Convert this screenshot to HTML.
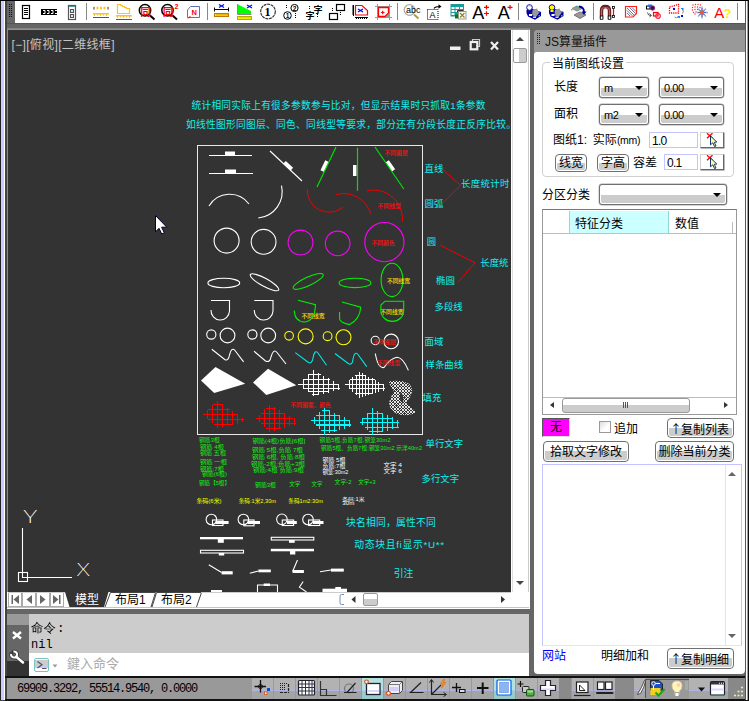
<!DOCTYPE html>
<html lang="zh">
<head>
<meta charset="utf-8">
<title>JS算量插件</title>
<style>
html,body{margin:0;padding:0;}
body{width:749px;height:701px;overflow:hidden;background:#666;position:relative;
 font-family:"Liberation Sans","Noto Sans CJK SC",sans-serif;font-size:12px;color:#000;}
.abs{position:absolute;}
#frame-top{left:0;top:0;width:749px;height:1px;background:#000;}
#left-edge{left:0;top:0;width:7px;height:701px;background:#444;}
#left-edge i{position:absolute;top:1px;height:699px;}
#toolbar{left:15px;top:1px;width:734px;height:22px;background:#fff;}
#grip{left:7px;top:1px;width:8px;height:22px;background:#666;}
#band{left:7px;top:23px;width:742px;height:6px;background:#666;border-top:1px solid #555;box-sizing:border-box;}
#drawborder{left:7px;top:28px;width:523px;height:2px;background:linear-gradient(#7a7a7a,#999);}

#panel{left:534px;top:52px;width:211px;height:622px;background:#fff;border-radius:3px 0 4px 4px;}
#panelhead{left:534px;top:30px;width:211px;height:24px;background:#999;border-radius:3px 0 0 0;}
#panelhead span{position:absolute;left:11px;top:5px;font-size:12px;line-height:14px;color:#111;white-space:nowrap;}
.dots{position:absolute;width:3px;background-image:radial-gradient(circle at .5px .5px,#222 .6px,transparent .7px);background-size:2px 2px;}
#right-edge{left:745px;top:0;width:4px;height:701px;}
#right-edge i{position:absolute;top:1px;height:699px;width:1px;}
.lbl{position:absolute;margin-top:1px;font-size:12px;line-height:14px;white-space:nowrap;color:#000;}
.combo{position:absolute;box-sizing:border-box;border:1px solid #707070;border-radius:3px;background:#fff;box-shadow:0 0 0 .4px #aaa;}
.combo:before{content:"";position:absolute;left:1px;right:1px;top:10px;bottom:1px;background:#ccc;border-radius:0 0 2px 2px;}
.combo:after{content:"";position:absolute;right:5px;top:8px;border-left:4px solid transparent;border-right:4px solid transparent;border-top:4px solid #000;}
.combo span{position:absolute;left:4px;top:3px;font-size:11px;line-height:14px;color:#000;z-index:1;letter-spacing:-.4px;}
.btn{position:absolute;box-sizing:border-box;border:1px solid #707070;border-radius:4px;background:#fff;text-align:center;font-size:12px;line-height:15px;white-space:nowrap;}
.btn:before{content:"";position:absolute;left:1px;right:1px;top:48%;bottom:1px;background:#ccc;border-radius:0 0 2px 2px;}
.btn span{position:relative;z-index:1;top:1px;}
.ar{font-weight:normal;font-family:"Noto Sans CJK SC",sans-serif;font-size:12px;display:inline-block;width:9px;text-align:center;text-indent:-2px;}
.inp{position:absolute;box-sizing:border-box;border:1px solid #c4c4ff;background:#fff;font-size:12px;line-height:14px;padding:1px 0 0 2px;letter-spacing:-.7px;}
.pick{position:absolute;box-sizing:border-box;background:#fff;border:1px solid;border-color:#d0d0d0 #666 #666 #d0d0d0;box-shadow:.5px .5px 0 #777;}

#tbl{left:542px;top:209px;width:195px;height:206px;box-sizing:border-box;border:1px solid #999;border-top-color:#777;background:#fff;}
#tblhead{left:543px;top:233px;width:193px;height:1px;background:#bbb;}
#tblsel{left:569px;top:211px;width:100px;height:23px;box-sizing:border-box;background:#ccffff;border:1px solid #8fd8d8;border-top:none;}
#tblscroll{left:543px;top:397px;width:193px;height:1px;background:#bbb;}
#thumb{left:562px;top:398px;width:128px;height:15px;box-sizing:border-box;border:1px solid #999;border-radius:3px;background:linear-gradient(#fff 0,#fff 45%,#ccc 45%,#ccc 100%);}
.tri{position:absolute;width:0;height:0;}
#ta{left:542px;top:464px;width:200px;height:182px;box-sizing:border-box;border:1px solid #c4c4ff;border-bottom-color:#c8f0f8;background:#fff;}
#chk{left:599px;top:421px;width:12px;height:12px;box-sizing:border-box;border:1px solid #999;background:linear-gradient(135deg,#ddd 0,#fff 60%);}
#wu{left:542px;top:418px;width:28px;height:19px;box-sizing:border-box;background:#ff00ff;border:1px solid;border-color:#555 #ddd #ddd #555;font-size:12px;line-height:16px;text-align:center;}

#draw{left:8px;top:30px;width:503px;height:562px;background:#333;overflow:hidden;}
#vscroll{left:511px;top:30px;width:19px;height:579px;background:#fff;}
#tabbar{left:7px;top:592px;width:523px;height:17px;background:#fff;}
#tabline{left:7px;top:607px;width:522px;height:1px;background:#c4c4c4;}
.nav{position:absolute;top:0;width:14px;height:15px;box-sizing:border-box;border:1px solid #aaa;background:#fff;}
#cmdgrip{left:7px;top:614px;width:22px;height:62px;background:#666;}
#cmdhist{left:29px;top:614px;width:500px;height:39px;background:#ccc;font-family:"Liberation Mono","WenQuanYi Zen Hei","Noto Sans CJK SC",monospace;font-size:12px;line-height:14px;}
#cmdin{left:29px;top:653px;width:500px;height:23px;background:#fff;}
#status{left:7px;top:678px;width:738px;height:21px;background:#999;}
#statline{left:5px;top:676px;width:740px;height:2px;background:#111;}
#botline{left:5px;top:699px;width:744px;height:2px;background:#111;}
.sb{position:absolute;top:0;height:21px;width:21px;background:linear-gradient(#b2b2b2 0,#b2b2b2 57%,#b4b4e4 57%,#b4b4e4 62%,#a4a4a4 62%,#a4a4a4 100%);}
.sb.on{background:linear-gradient(#b4e0e0 0,#b4e0e0 57%,#a8d0e8 57%,#a8d0e8 62%,#98cccc 62%,#98cccc 100%);}
#grp{left:542px;top:62px;width:192px;height:115px;box-sizing:border-box;border:1px solid #d0d0d0;border-radius:4px;}
</style>
</head>
<body>
<div class="abs" id="left-edge"><i style="left:0;width:1px;background:#222"></i><i style="left:1px;width:3px;background:#ccccff"></i><i style="left:4px;width:1px;background:#fff"></i></div>
<div class="abs" id="grip"></div>
<div class="abs" id="toolbar"></div>
<svg class="abs" id="tbicons" style="left:0;top:0" width="749" height="24" viewBox="0 0 749 24" font-family="'Liberation Sans','Noto Sans CJK SC',sans-serif">
<!-- grip -->
<g fill="#111"><rect x="9" y="4" width="1" height="1"/><rect x="11" y="4" width="1" height="1"/><rect x="9" y="6" width="1" height="1"/><rect x="11" y="6" width="1" height="1"/><rect x="9" y="8" width="1" height="1"/><rect x="11" y="8" width="1" height="1"/><rect x="9" y="10" width="1" height="1"/><rect x="11" y="10" width="1" height="1"/><rect x="9" y="12" width="1" height="1"/><rect x="11" y="12" width="1" height="1"/><rect x="9" y="14" width="1" height="1"/><rect x="11" y="14" width="1" height="1"/><rect x="9" y="16" width="1" height="1"/><rect x="11" y="16" width="1" height="1"/></g>
<!-- separators -->
<g stroke="#888" stroke-width="1"><path d="M86.5 3V20M207.5 3V20M397.5 3V20M518.5 3V20M593.5 3V20M737.5 3V20"/></g>
<!-- 1 -->
<rect x="22.5" y="5.5" width="7" height="13" fill="#fff" stroke="#000" stroke-width="1.2"/>
<path d="M24 8.5h4M24 10.5h4M24 12.5h4M24 14.5h4" stroke="#000" stroke-width="1"/>
<!-- 2 -->
<rect x="41" y="9" width="16" height="6" fill="#000"/>
<path d="M43 10.5h2v3h-2M47 10.5h2v3h-2M51 10.5h2v3h-2M55 10.5h2M55 13.5h2" stroke="#fff" stroke-width="1" fill="none"/>
<!-- 3 -->
<rect x="68.500" y="5.500" width="7" height="14" fill="#fff" stroke="#555" stroke-width="1.2"/>
<path d="M69 6.500h6" stroke="#4a9a9a" stroke-width="1"/>
<rect x="70.500" y="9.500" width="3" height="3" fill="#ddd" stroke="#555" stroke-width="1"/>
<rect x="70.500" y="14.500" width="3" height="3" fill="#ddd" stroke="#555" stroke-width="1"/>
<!-- 4 -->
<path d="M93 8h16" stroke="#ffc020" stroke-width="2.500" stroke-dasharray="2 1.500"/>
<rect x="93" y="7" width="2" height="2.500" fill="#999"/><rect x="107" y="7" width="2" height="2.500" fill="#999"/>
<rect x="93" y="13" width="16" height="1.500" fill="#ffc020"/>
<path d="M94.500 14v2M97.500 14v1.500M100.500 14v2M103.500 14v1.500M106.500 14v2" stroke="#ffc020" stroke-width="1"/>
<path d="M93 17.500h16" stroke="#2a6a6a" stroke-width="1"/>
<!-- 5 -->
<path d="M117.500 13.500V4.500H120.500V5.500H122.500V6.500H124.500V7.500H126.500V8.500H129.500V13.500Z" fill="none" stroke="#ffc020" stroke-width="1.200"/>
<rect x="116" y="15" width="16" height="1.500" fill="#ffc020"/>
<path d="M117.500 16v2M120.500 16v1.500M123.500 16v2M126.500 16v1.500M129.500 16v2" stroke="#ffc020" stroke-width="1"/>
<path d="M116 19.500h16" stroke="#2a6a6a" stroke-width="1"/>
<!-- 6,7 magnifiers -->
<g fill="none" stroke="#000"><circle cx="145" cy="10.300" r="5.700" stroke-width="1.500"/><path d="M149.500 15L154.500 19.500" stroke-width="2"/>
<circle cx="167.500" cy="10.300" r="5.700" stroke-width="1.500"/><path d="M172 15L177 19.500" stroke-width="2"/></g>
<text x="140.200" y="15.800" font-size="10.500" font-weight="700" fill="#ff0000">同</text>
<text x="162.700" y="15.800" font-size="10.500" font-weight="700" fill="#ff0000">同</text>
<text x="174.500" y="9" font-size="7" font-weight="bold" fill="#ff0000">2</text>
<!-- 8 -->
<path d="M187.500 17.500V10L190.500 6.500H199.500V17.500Z" fill="#fff" stroke="#6a6ab0" stroke-width="1"/>
<text x="191.500" y="15" font-size="7.500" font-weight="bold" fill="#ff0000">N</text>
<path d="M188 18.500L190.500 16" stroke="#ff0000" stroke-width="1"/>
<!-- 9 -->
<path d="M214.500 7.500v4M228.500 7.500v4M214.500 9.500h14" stroke="#000" stroke-width="1" fill="none"/>
<path d="M219 4.500l5 3M219 7.500l5 -3" stroke="#0000ff" stroke-width="1.200"/>
<rect x="214.500" y="13.500" width="14" height="3" fill="#ffe000" stroke="#c07800" stroke-width="1"/>
<path d="M217 14v1.500M219 14v1.500M221 14v1.500M223 14v1.500M225 14v1.500M227 14v1.500" stroke="#c07800" stroke-width=".8"/>
<!-- 10 -->
<path d="M238 4.500L251 11V14H238Z" fill="#00ff00"/>
<path d="M237.500 4V14.500H251.500" fill="none" stroke="#888" stroke-width="1"/>
<path d="M247 5l5 3M247 8l5 -3" stroke="#0000ff" stroke-width="1.200"/>
<rect x="237.500" y="16.500" width="14" height="3" fill="#ffff00" stroke="#b8a800" stroke-width="1"/>
<path d="M240 17v1.500M242 17v1.500M244 17v1.500M246 17v1.500M248 17v1.500M250 17v1.500" stroke="#b8a800" stroke-width=".8"/>
<!-- 11 -->
<circle cx="268" cy="11.500" r="7.300" fill="#fff" stroke="#333" stroke-width="1.200" stroke-dasharray="3 .7"/>
<text x="264.500" y="16" font-size="12" font-weight="bold" font-family="'Liberation Serif',serif" fill="#000">1</text>
<!-- 12 -->
<circle cx="294.500" cy="8" r="3.600" fill="#fff" stroke="#000" stroke-width="1"/>
<circle cx="287.500" cy="15.500" r="3.800" fill="#fff" stroke="#000" stroke-width="1"/>
<text x="292.700" y="10.500" font-size="6.500" font-weight="bold" fill="#000">2</text>
<text x="285.800" y="18" font-size="6.500" font-weight="bold" fill="#000080">1</text>
<path d="M286.500 5v4M295.500 13v5" stroke="#000" stroke-width="1" stroke-dasharray="1 1"/>
<!-- 13 -->
<text x="313.500" y="12.500" font-size="9" font-weight="bold" fill="#000">字</text>
<text x="305.500" y="19" font-size="9" font-weight="bold" fill="#000">字</text>
<path d="M309.500 6v4M317.500 14v4" stroke="#000" stroke-width="1" stroke-dasharray="1 1"/>
<!-- 14 -->
<rect x="336.500" y="4.500" width="8" height="6" fill="#fff" stroke="#000" stroke-width="1.200"/>
<rect x="329.500" y="13.500" width="8" height="6" fill="#fff" stroke="#000" stroke-width="1.200"/>
<path d="M332.500 8v4M340.500 12v4" stroke="#000" stroke-width="1" stroke-dasharray="1 1"/>
<!-- 15 -->
<path d="M355.500 5.500H362L367.500 10.500V15H355.500Z" fill="#fff" stroke="#ff0000" stroke-width="1.200"/>
<path d="M358 9l5 3M358 12l5 -3" stroke="#0000ff" stroke-width="1.200"/>
<path d="M353.500 5v11" stroke="#000" stroke-width="1"/><path d="M352 6h2M352 8h2M352 10h2M352 12h2M352 14h2" stroke="#000" stroke-width="1"/>
<path d="M355 17.500h13" stroke="#000" stroke-width="1"/><path d="M356.500 18v1M358.500 18v1M360.500 18v1M362.500 18v1M364.500 18v1M366.500 18v1" stroke="#000" stroke-width="1"/>
<!-- 16 -->
<path d="M377.500 4v16M389.500 4v16M375 6.500h17M375 17.500h17" stroke="#999" stroke-width="1"/>
<path d="M385 17L389 13V17Z" fill="#999"/>
<path d="M378.500 7.500H388.500V13L385 16.500H378.500Z" fill="#fff" stroke="#ff0000" stroke-width="1.300"/>
<path d="M381 12.500h3.500M382.700 10.800v3.500" stroke="#ff0000" stroke-width="1.200"/>
<!-- 17 -->
<circle cx="409.500" cy="10" r="5.300" fill="#fff" stroke="#aaa" stroke-width="1.200"/>
<path d="M414 14.500L418.500 18.500" stroke="#a8a030" stroke-width="1.800"/>
<text x="406" y="13" font-size="9" fill="#000">abc</text>
<!-- 18 -->
<rect x="427.500" y="9.500" width="10.500" height="10" fill="none" stroke="#000" stroke-width="1" stroke-dasharray="1 1"/>
<text x="429.500" y="17.500" font-size="9" fill="#000">A</text>
<path d="M434 8.500Q435 6.500 440 6.500" fill="none" stroke="#000" stroke-width="1.200"/><path d="M438.500 4.200L441.500 6.500L438.500 8.800Z" fill="#000"/>
<!-- 19 -->
<rect x="450.500" y="4" width="13.500" height="12.500" fill="#1a9a9a"/>
<g fill="#fff"><rect x="451.500" y="7" width="3" height="2"/><rect x="455.500" y="7" width="3.500" height="2"/><rect x="460" y="7" width="3" height="2"/><rect x="451.500" y="10" width="3" height="2"/><rect x="455.500" y="10" width="3.500" height="2"/><rect x="451.500" y="13" width="3" height="2"/></g>
<rect x="455" y="14.500" width="4" height="4" fill="#008000"/>
<rect x="458.500" y="11.500" width="7.500" height="7.500" fill="#fff" stroke="#999" stroke-width="1"/>
<path d="M457.500 12V10.500H463" fill="none" stroke="#333" stroke-width="1"/>
<path d="M460 13l4.500 4.500M464.500 13L460 17.500" stroke="#8a8a20" stroke-width="1.300"/>
<!-- 20,21 -->
<text x="472.300" y="18.500" font-size="18" fill="#000">A</text>
<path d="M484 7.300h5M486.500 5v4.600M484 13.500h5M486.500 11.200v4.600" stroke="#ff0000" stroke-width="1.200"/>
<text x="497.800" y="18.500" font-size="18" fill="#000">A</text>
<path d="M507.500 7.300h5M510 5v4.600" stroke="#ff0000" stroke-width="1.200"/>
<!-- 22,23 layers -->
<g><path d="M526.500 10L533 9L541 12V16L535 19.700L528 16.500L526.500 13Z" fill="#0000a0"/>
<path d="M532.500 9.800L537 8.500L539 13L536 17L532 15Z" fill="#999"/>
<rect x="529" y="14" width="3" height="2" fill="#fff"/><rect x="533" y="16.500" width="3" height="1.500" fill="#ddd"/>
<rect x="538.500" y="11" width="1.500" height="1.500" fill="#20b0b0"/><rect x="538.500" y="15" width="1.500" height="1.500" fill="#20b0b0"/><rect x="530.500" y="11" width="1.500" height="1.500" fill="#20b0b0"/>
<path d="M527 8.500L529 12.500H532L532.500 8.500Z" fill="#0000a0"/></g>
<circle cx="529.500" cy="7.500" r="2.800" fill="#fff" stroke="#0000a0" stroke-width="1"/><path d="M527.200 6.300A2.800 2.800 0 0 1 531.800 6.300Z" fill="#aaa"/>
<g transform="translate(22.500,0)"><path d="M526.500 10L533 9L541 12V16L535 19.700L528 16.500L526.500 13Z" fill="#0000a0"/>
<path d="M532.500 9.800L537 8.500L539 13L536 17L532 15Z" fill="#999"/>
<rect x="529" y="14" width="3" height="2" fill="#fff"/><rect x="533" y="16.500" width="3" height="1.500" fill="#ddd"/>
<rect x="538.500" y="11" width="1.500" height="1.500" fill="#20b0b0"/><rect x="538.500" y="15" width="1.500" height="1.500" fill="#20b0b0"/><rect x="530.500" y="11" width="1.500" height="1.500" fill="#20b0b0"/>
<path d="M527 8.500L529 12.500H532L532.500 8.500Z" fill="#0000a0"/></g>
<circle cx="552" cy="7.500" r="2.800" fill="#ffff00" stroke="#0000a0" stroke-width="1"/><rect x="550.500" y="10" width="3" height="2" fill="#ffff00"/>
<!-- 24 -->
<path d="M572 8.500L577 6L582 8.500L577 11Z" fill="#999" stroke="#888" stroke-width="1"/>
<path d="M574 15L580 12L586 15L580 18.500Z" fill="#999" stroke="#777" stroke-width="1"/>
<path d="M579 6.500Q584 7 584 12" fill="none" stroke="#0000a0" stroke-width="1.800"/><path d="M581.500 11.500H586.500L584 15Z" fill="#0000a0"/>
<rect x="571" y="9" width="1.500" height="1.500" fill="#b0b000"/><rect x="576" y="6" width="2" height="1" fill="#20b0b0"/>
<!-- 25 magnet -->
<path d="M601.500 19V10.500Q601.500 6.500 605.500 6.500Q609.500 6.500 609.500 10.500V19" fill="none" stroke="#6a2020" stroke-width="3.400"/>
<path d="M601.500 17V10.500Q601.500 7.500 605.500 7.500Q609.500 7.500 609.500 10.500V17" fill="none" stroke="#b06868" stroke-width="1.200"/>
<rect x="600.300" y="16" width="2.600" height="3.300" fill="#fff" stroke="#000" stroke-width=".8"/><rect x="608.200" y="16" width="2.600" height="3.300" fill="#fff" stroke="#000" stroke-width=".8"/>
<path d="M613.500 8.500v7.500" stroke="#ff0000" stroke-width="1.200"/>
<rect x="612.500" y="6.500" width="2" height="2" fill="#fff" stroke="#000" stroke-width=".8"/><rect x="612.500" y="15.500" width="2" height="2" fill="#fff" stroke="#000" stroke-width=".8"/>
<!-- 26 -->
<path d="M625.500 6.500H636.500V13.500L633 17H625.500Z" fill="#fff" stroke="#ff2020" stroke-width="1.200"/>
<path d="M627 8l7 7M629.500 7.500l6 6M627 10.500l5.500 5.500M632 7.500l4 4M627 13l3 3" stroke="#445577" stroke-width=".8"/>
<!-- 27 -->
<rect x="646.500" y="6" width="3.500" height="3" fill="#fff" stroke="#000" stroke-width="1"/>
<rect x="648" y="4.500" width="4" height="2" fill="#0080ff"/>
<circle cx="652.500" cy="8" r="2.200" fill="#222" stroke="#a020a0" stroke-width="1"/>
<path d="M647.500 12.500Q648 16 651 15.500M649.500 13.500L651.500 15.500L649.500 17" fill="none" stroke="#555" stroke-width="1"/>
<rect x="653.500" y="12.500" width="4.500" height="3.500" fill="#fff" stroke="#ff0000" stroke-width="1.200"/>
<circle cx="658" cy="16" r="2.300" fill="none" stroke="#ff2050" stroke-width="1.200"/>
<!-- 28 -->
<path d="M669.500 7L678.500 4.500V13H669.500Z" fill="none" stroke="#ff0000" stroke-width="1.300" stroke-dasharray="1.200 1"/>
<rect x="673" y="8" width="2" height="2" fill="#0000ff"/><rect x="681" y="15" width="2" height="2" fill="#0000ff"/>
<path d="M682 9Q684.500 11 682.500 13.500M679 17Q676.500 18.500 674.500 17" fill="none" stroke="#888" stroke-width="1"/>
<path d="M680.500 8h3v2.500Z M677 16h3v2.500Z" fill="#0080ff"/>
<!-- 29 -->
<g fill="#ff2020"><circle cx="693" cy="5" r=".7"/><circle cx="695.500" cy="4.500" r=".7"/><circle cx="698" cy="4.500" r=".7"/><circle cx="700.500" cy="5" r=".7"/><circle cx="692.500" cy="7.500" r=".7"/><circle cx="695" cy="7" r=".7"/><circle cx="697.500" cy="7" r=".7"/><circle cx="700" cy="7.500" r=".7"/><circle cx="692.500" cy="10" r=".7"/><circle cx="695" cy="9.500" r=".7"/><circle cx="697.500" cy="9.500" r=".7"/><circle cx="693.500" cy="12.500" r=".7"/><circle cx="696" cy="12" r=".7"/><circle cx="695" cy="14" r=".7"/></g>
<path d="M702 6.500v12M696.500 12.500h11.500M698 8.500l8 8M706 8.500l-8 8" stroke="#99aadd" stroke-width="1.500"/>
<path d="M702 8v9M698 12.500h8M699.500 10l5 5M704.500 10l-5 5" stroke="#334488" stroke-width=".7"/>
<circle cx="702" cy="12.500" r="2" fill="#ff5030"/>
<!-- 30 -->
<text x="714.300" y="17.500" font-size="15" fill="#ff0000">A</text>
<text x="723.500" y="18" font-size="13" fill="#ffee00" font-weight="bold">?</text>
</svg>
<div class="abs" id="band"></div>
<div class="abs" id="drawborder"></div>
<div class="abs" style="left:7px;top:29px;width:1px;height:579px;background:#888"></div>
<div class="abs" id="draw"></div>
<svg class="abs" id="dwg" style="left:8px;top:30px" width="503" height="562" viewBox="8 30 503 562" font-family="'Liberation Sans','Noto Sans CJK SC',sans-serif">
<defs>
</defs>
<!-- title + controls -->
<text x="11.500" y="49" font-size="12" fill="#c4c4c4" textLength="103" lengthAdjust="spacing">[−][俯视][二维线框]</text>
<rect x="450" y="46.500" width="10.500" height="3.500" fill="#f0f0f0"/>
<path d="M472.500 41v-1.500h7v7h-1.500" fill="none" stroke="#ccc" stroke-width="1.200"/>
<rect x="470.700" y="42" width="6.600" height="7.300" fill="none" stroke="#f0f0f0" stroke-width="2.200"/>
<path d="M491 42l7 7.500M498 42l-7 7.500" stroke="#f0f0f0" stroke-width="2.200"/>
<!-- cyan header text -->
<g fill="#10f0f0" font-size="9.700" font-weight="400">
<text x="191.500" y="108.800" textLength="294" lengthAdjust="spacing">统计相同实际上有很多参数参与比对，但显示结果时只抓取1条参数</text>
<text x="186" y="128" textLength="330" lengthAdjust="spacing">如线性图形同图层、同色、同线型等要求，部分还有分段长度正反序比较。</text>
</g>
<!-- frame -->
<rect x="197.500" y="145.500" width="225" height="289" fill="none" stroke="#e8e8e8" stroke-width="1"/>
<!-- row 1 lines -->
<g stroke="#ffffff" stroke-width="1.100" fill="none">
<path d="M209 155.500H252M209 173.500H253M270 151L302 181"/>
<path d="M209 206A24 24 0 0 1 249 204"/>
<path d="M281.500 185.700A26.500 26.500 0 0 1 258.300 218"/>
</g>
<g fill="#fff">
<rect x="225" y="151.500" width="10" height="4"/><rect x="225" y="169.500" width="11" height="4"/>
<rect x="-5" y="-3.600" width="10" height="3.600" transform="translate(287,167) rotate(43.200)"/>
<rect x="-5.500" y="-4" width="11" height="4" transform="translate(326.500,167) rotate(-64.600)"/>
<rect x="353" y="165" width="3.500" height="11"/>
<rect x="-5.500" y="-4" width="11" height="3.800" transform="translate(388.700,167) rotate(55.500)"/>
</g>
<g stroke="#00e000" stroke-width="1.200" fill="none">
<path d="M336 147L317 187M357.500 147.800V190.700M375 147L403.800 189"/>
</g>
<g stroke="#f00000" stroke-width="1" fill="none">
<path d="M307.300 189A22 22 0 0 0 343 207.400"/>
<path d="M336 194.700A28 28 0 0 1 370.700 213.800"/>
<path d="M366.800 190.900A29 29 0 0 1 402.400 221.600"/>
<path d="M442.800 169.700L460.600 185.300L442.800 203M440.300 245.300L475 262.800L457.400 282.800"/>
</g>
<g fill="#ff1010" font-size="5.800" font-weight="500"><text x="384.500" y="155.300">不同图层</text><text x="377.600" y="208.300">不同线型</text><text x="371.400" y="245.300">不同颜色</text></g>
<!-- right labels -->
<g fill="#10f0f0" font-size="9.400" font-weight="400">
<text x="424.600" y="172.300">直线</text><text x="424.600" y="207.300">圆弧</text><text x="461" y="187" textLength="48.500">长度统计时</text>
<text x="426.800" y="245.300">圆</text><text x="436" y="284.300">椭圆</text><text x="480.300" y="265.500">长度统</text>
<text x="434.500" y="310.300">多段线</text><text x="424.600" y="344.600">面域</text><text x="425.500" y="368">样条曲线</text><text x="422.500" y="401">填充</text>
<text x="425.500" y="446.500">单行文字</text><text x="421.600" y="481.500">多行文字</text>
</g>
<!-- circles -->
<g stroke="#ffffff" stroke-width="1.100" fill="none">
<circle cx="226.600" cy="240.600" r="12.500"/><circle cx="263.600" cy="241.800" r="12.400"/>
<ellipse cx="223.800" cy="283" rx="15.900" ry="4.800"/>
<ellipse cx="264.500" cy="282.300" rx="16.100" ry="4" transform="rotate(28.500 264.500 282.300)"/>
</g>
<g stroke="#ff00ff" stroke-width="1.100" fill="none">
<circle cx="300.500" cy="242.500" r="12.400"/><circle cx="337.700" cy="243.400" r="12.300"/><circle cx="384.400" cy="242.100" r="19.600"/>
</g>
<g stroke="#00f000" stroke-width="1.100" fill="none">
<ellipse cx="308.200" cy="281.400" rx="16.500" ry="4.200" transform="rotate(-25 308.200 281.400)"/>
<ellipse cx="355" cy="282.900" rx="15.900" ry="4.700"/>
<ellipse cx="392" cy="279.900" rx="10.900" ry="16.700"/>
</g>
<g fill="#ffe000" font-size="5.800" font-weight="500"><text x="386.900" y="282.800">不同线宽</text><text x="301.400" y="318.300">不同线宽</text><text x="380.300" y="313.600">不同线宽</text></g>
<!-- polylines -->
<g stroke="#ffffff" stroke-width="1.100" fill="none">
<path d="M211 300.500H229.500V311A9.250 9.500 0 0 1 211 310"/>
<path d="M254.300 300.500H273V311A9.350 9.500 0 0 1 254.300 310"/>
<circle cx="211.300" cy="334.500" r="4.600"/><circle cx="227.500" cy="335.500" r="7.400"/><circle cx="252.400" cy="334.500" r="4.600"/><circle cx="268.200" cy="335.500" r="7.400"/>
<path d="M211.800 349.300L225 359.700Q228.500 361 229.500 355Q231.500 346.500 235 350.500L243.600 361.800"/>
<path d="M254 351.200L265.500 361Q270 363 271 357Q273.500 348 277 352.500L286 364"/>
<circle cx="375.300" cy="340.500" r="4.200"/><circle cx="391.200" cy="341.400" r="7.300"/>
<path d="M375.300 353.500Q378 369 384 367.500Q391 358 397 357.300Q403 357.500 408.400 370.400"/>
</g>
<g stroke="#00f000" stroke-width="1.100" fill="none">
<path d="M298 300.300L315.500 304.600Q315 321 304.600 322Q294.500 321.500 294.300 310.500"/>
<path d="M342 302L360.700 307.200Q360 319 349.500 324.600Q340 322.500 339.600 319V312"/>
<path d="M385 301.200H403.700V310.600A11.400 10.800 0 0 1 380.900 310.600V305Z"/>
</g>
<g stroke="#ffff00" stroke-width="1.100" fill="none">
<circle cx="289.100" cy="335.800" r="4.300"/><circle cx="305.600" cy="336.400" r="7.500"/><circle cx="327.600" cy="336.200" r="4.400"/><circle cx="343.500" cy="337.300" r="7.500"/>
</g>
<g stroke="#00e8e8" stroke-width="1.100" fill="none">
<path d="M295.300 352.600L308.400 362.500Q312 364 313 358Q314.500 349 318 353L326.500 365.300"/>
<path d="M335 353.500L348.500 363.800Q352.500 365.500 353 359Q354.500 350.500 358 354.500L366.700 366.600"/>
</g>
<g fill="#ff1010" font-size="5.800" font-weight="500"><text x="372.900" y="343.500">不同图层</text><text x="377" y="365">不同线型</text><text x="290.300" y="407.200">不同图案、颜色</text></g>
<!-- fills -->
<path d="M201 380.500L215.500 367L245.200 383.700L214.200 392.900Z" fill="#fff"/>
<path d="M253 382.400L268 368.800L296.300 385.300L266.300 395Z" fill="#fff"/>
<!--HATCH-->
<path d="M213.3 404.6H222.7M207.7 409.6H230.0M203.0 414.2H236.8M208.3 419.3H243.9M213.5 424.2H231.9M207.7 409.5V418.7M212.6 405.1V423.4M217.5 400.9V428.0M222.5 404.3V426.9M227.4 407.6V425.8M232.3 410.9V424.7M237.3 414.3V423.5M242.2 417.6V422.4" stroke="#ff0000" stroke-width="1.15" fill="none" shape-rendering="crispEdges"/>
<path d="M265.6 408.5H275.9M260.6 413.4H284.7M255.8 418.2H293.4M261.0 423.4H295.7M265.7 428.2H281.0M259.5 414.5V421.9M264.7 409.4V427.2M269.5 404.6V432.0M274.4 407.3V430.6M279.7 410.3V429.1M284.5 413.0V427.7M289.4 415.7V426.3M294.3 418.4V424.9" stroke="#ff0000" stroke-width="1.15" fill="none" shape-rendering="crispEdges"/>
<path d="M308.4 374.6H321.0M302.8 379.6H330.2M297.8 384.0H338.2M303.4 388.3H340.0M307.9 391.8H328.8M311.5 394.6H317.7M303.2 379.1V388.3M308.5 374.4V392.4M313.4 370.1V396.2M318.2 372.7V395.0M323.4 375.6V393.7M328.2 378.2V392.5M333.2 381.0V391.2M338.1 383.6V390.0" stroke="#ffffff" stroke-width="1" fill="none" shape-rendering="crispEdges"/>
<path d="M355.3 375.4H365.9M349.8 379.9H374.7M344.8 384.0H382.7M350.0 388.9H384.7M354.8 393.4H373.1M349.5 380.0V388.5M352.9 377.2V391.7M356.0 374.7V394.6M359.5 371.8V397.9M362.7 373.4V397.0M365.9 375.1V396.0M368.9 376.6V395.1M372.1 378.2V394.2M375.4 379.9V393.2M378.9 381.7V392.2M383.5 384.0V390.8" stroke="#ffffff" stroke-width="1" fill="none" shape-rendering="crispEdges"/>
<path d="M321.6 410.7H330.0M316.3 415.3H339.5M310.8 420.2H349.6M315.5 425.0H351.2M320.5 430.2H337.3M314.8 416.6V424.2M319.6 412.3V429.2M324.8 407.8V434.5M329.3 410.0V433.1M334.5 412.5V431.5M339.3 414.9V430.1M344.3 417.3V428.6M349.2 419.7V427.1" stroke="#00ffff" stroke-width="1.15" fill="none" shape-rendering="crispEdges"/>
<path d="M367.2 413.2H382.6M362.3 418.1H393.1M359.6 422.2H399.4M364.7 427.1H399.0M369.1 431.3H382.8M362.7 417.6V425.3M367.5 412.9V429.8M372.4 408.1V434.5M377.7 410.6V433.1M382.5 412.8V431.9M387.7 415.2V430.5M392.5 417.4V429.3M397.4 419.7V428.0" stroke="#00ffff" stroke-width="1.15" fill="none" shape-rendering="crispEdges"/>
<!--/HATCH-->
<clipPath id="cres"><path d="M388 381.700Q398 379.500 406.800 382.500Q413 386 412 392Q410 398 406 402.700Q411 408 416.200 412Q411 416 404.200 415Q396 414.500 392.300 410.400Q388.500 406 389.300 401.800Q391 396 394 391.500Q391 386 388 381.700ZM401 391.500Q397.500 398 402.500 404Q405 398 401 391.500Z" clip-rule="evenodd"/></clipPath>
<path d="M385.0 418.0L419.0 452.0M385.0 414.8L419.0 448.8M385.0 411.6L419.0 445.6M385.0 408.4L419.0 442.4M385.0 405.2L419.0 439.2M385.0 402.0L419.0 436.0M385.0 398.8L419.0 432.8M385.0 395.6L419.0 429.6M385.0 392.4L419.0 426.4M385.0 389.2L419.0 423.2M385.0 386.0L419.0 420.0M385.0 382.8L419.0 416.8M385.0 379.6L419.0 413.6M385.0 376.4L419.0 410.4M385.0 373.2L419.0 407.2M385.0 370.0L419.0 404.0M385.0 366.8L419.0 400.8M385.0 363.6L419.0 397.6M385.0 360.4L419.0 394.4M385.0 357.2L419.0 391.2M385.0 354.0L419.0 388.0M385.0 350.8L419.0 384.8M385.0 347.6L419.0 381.6M385.0 344.4L419.0 378.4M385.0 377.0L419.0 343.0M385.0 380.2L419.0 346.2M385.0 383.4L419.0 349.4M385.0 386.6L419.0 352.6M385.0 389.8L419.0 355.8M385.0 393.0L419.0 359.0M385.0 396.2L419.0 362.2M385.0 399.4L419.0 365.4M385.0 402.6L419.0 368.6M385.0 405.8L419.0 371.8M385.0 409.0L419.0 375.0M385.0 412.2L419.0 378.2M385.0 415.4L419.0 381.4M385.0 418.6L419.0 384.6M385.0 421.8L419.0 387.8M385.0 425.0L419.0 391.0M385.0 428.2L419.0 394.2M385.0 431.4L419.0 397.4M385.0 434.6L419.0 400.6M385.0 437.8L419.0 403.8M385.0 441.0L419.0 407.0M385.0 444.2L419.0 410.2M385.0 447.4L419.0 413.4M385.0 450.6L419.0 416.6" clip-path="url(#cres)" stroke="#fff" stroke-width=".85" fill="none" shape-rendering="crispEdges"/>
<!-- small green text -->
<g fill="#10f010" font-size="5.600" font-weight="400">
<text x="199" y="442.300" textLength="20.8" lengthAdjust="spacingAndGlyphs">钢筋3根</text><text x="200" y="448.800" textLength="24" lengthAdjust="spacingAndGlyphs">钢筋 4根</text><text x="200" y="454.800" textLength="26" lengthAdjust="spacingAndGlyphs">钢筋 五根</text><text x="200" y="463.800" textLength="27" lengthAdjust="spacingAndGlyphs">钢筋 一根</text><text x="200" y="470.800" textLength="24" lengthAdjust="spacingAndGlyphs">钢筋:7根</text><text x="202" y="476.300" textLength="25" lengthAdjust="spacingAndGlyphs">钢筋(6根)</text><text x="199" y="484.500" textLength="31" lengthAdjust="spacingAndGlyphs">钢筋【5根】</text>
<text x="252.400" y="442.500" textLength="53" lengthAdjust="spacingAndGlyphs">钢筋(4根)负筋[6根]</text><text x="252" y="451.500" textLength="51" lengthAdjust="spacingAndGlyphs">钢筋 5根,负筋 7根</text><text x="252" y="458.500" textLength="53" lengthAdjust="spacingAndGlyphs">钢筋 6根, 负筋:8根</text><text x="251" y="465.500" textLength="54" lengthAdjust="spacingAndGlyphs">钢筋-2根;负筋+3根</text><text x="253" y="471.800" textLength="51" lengthAdjust="spacingAndGlyphs">钢筋:4根 负筋:9根</text>
<text x="255" y="486.500" textLength="21" lengthAdjust="spacingAndGlyphs">钢筋3根</text><text x="289.200" y="485.800" textLength="11.2" lengthAdjust="spacingAndGlyphs">文字</text><text x="311.600" y="485.500" textLength="10.8" lengthAdjust="spacingAndGlyphs">文字</text><text x="334.600" y="484" textLength="16.8" lengthAdjust="spacingAndGlyphs">文字-2</text><text x="358.300" y="483.500" textLength="17.4" lengthAdjust="spacingAndGlyphs">文字+3</text>
<text x="319.600" y="441.800" textLength="71">钢筋5根,负筋7根,钢笼30m2</text><text x="321" y="450" textLength="101">钢筋5根、负筋7根;钢笼30m2 示洋40m2</text>
</g>
<g fill="#ffffff" font-size="5.600" font-weight="400">
<text x="322.400" y="461.500" textLength="23" lengthAdjust="spacingAndGlyphs">钢筋 5根</text><text x="322.400" y="467.800" textLength="23" lengthAdjust="spacingAndGlyphs">负筋:7根</text><text x="322.400" y="474.200" textLength="26" lengthAdjust="spacingAndGlyphs">钢笼:30m2</text>
<text x="383.500" y="467.200" textLength="18.4" lengthAdjust="spacingAndGlyphs">文字 4</text><text x="383.500" y="473.200" textLength="18.4" lengthAdjust="spacingAndGlyphs">文字 6</text>
<text x="342.300" y="501" font-size="4.800" textLength="22.3" lengthAdjust="spacingAndGlyphs">条码:1米</text><text x="342.300" y="505.300" font-size="4.500" textLength="12" lengthAdjust="spacingAndGlyphs">30m</text>
</g>
<g fill="#ffff00" font-size="5.800" font-weight="400">
<text x="196.400" y="502.500" textLength="25.2" lengthAdjust="spacingAndGlyphs">条码(6米)</text><text x="238.700" y="502.500" textLength="37.3" lengthAdjust="spacingAndGlyphs">条码:1米2,30m</text><text x="288.300" y="502.500" textLength="34.7" lengthAdjust="spacingAndGlyphs">条码1m2:30m</text>
</g>
<!-- blocks -->
<g stroke="#ffffff" stroke-width="1.100" fill="none">
<circle cx="211.400" cy="519.500" r="5.300"/><rect x="212.500" y="520" width="10.500" height="5.500"/>
<circle cx="243.400" cy="519.500" r="5.300"/><rect x="243.800" y="520" width="10.200" height="5.800"/>
<circle cx="281.900" cy="519.300" r="5.300"/><rect x="282.300" y="520" width="11.300" height="5.500"/>
<circle cx="308" cy="519.500" r="5.300"/><rect x="308.600" y="520" width="11.100" height="5.500"/>
<rect x="200.500" y="550.300" width="43" height="2.700"/><rect x="271.300" y="537.300" width="42.500" height="2.700"/>
<path d="M208.800 564.800L221.600 572.500M249.800 573.300L258.400 571M297.500 560L292.600 571.500M320 571.800L331 570"/>
<path d="M257.500 592V585H277.500V592M303.200 581.500L299.400 587.200L306.500 592"/>
</g>
<g fill="#fff">
<rect x="215.600" y="521" width="13" height="3"/><rect x="247.700" y="521" width="12.300" height="3"/><rect x="287" y="521" width="9.800" height="3"/><rect x="313" y="521" width="10.500" height="3"/>
<rect x="200" y="537" width="43" height="2.300"/><rect x="217.800" y="539" width="6" height="3.800"/>
<rect x="218.800" y="553" width="5.400" height="2.500"/>
<rect x="289" y="540" width="5.700" height="2.800"/>
<rect x="270.800" y="548.800" width="43.200" height="2.500"/><rect x="290" y="551" width="5.300" height="3.500"/>
<rect x="221.600" y="571.200" width="11.100" height="3.200"/><rect x="258.400" y="569.500" width="12.400" height="2.800"/><rect x="292.600" y="570" width="11.300" height="3"/><rect x="331" y="568.600" width="12.800" height="3"/>
<rect x="263.700" y="583.500" width="6.300" height="2.500"/><rect x="211" y="590" width="11" height="2"/><rect x="322.500" y="588.700" width="24.500" height="3.300"/><rect x="335.300" y="587" width="5.700" height="2"/>
</g>
<g fill="#10f0f0" font-size="9.800" font-weight="400">
<text x="346" y="525.500" textLength="89.700">块名相同，属性不同</text><text x="354.200" y="547.800" textLength="89.800" lengthAdjust="spacing">动态块且fi显示*U**</text><text x="393.700" y="576.800">引注</text>
</g>
<!-- UCS -->
<g stroke="#ffffff" stroke-width="1.100" fill="none"><path d="M22.500 528V577.500H72"/><rect x="18.500" y="572.500" width="9" height="9"/></g>
<text x="23.500" y="523" font-size="17.500" font-weight="100" fill="#fff" font-family="'Noto Sans CJK SC',sans-serif" textLength="13.500" lengthAdjust="spacingAndGlyphs">Y</text>
<text x="76.500" y="576" font-size="17.500" font-weight="100" fill="#fff" font-family="'Noto Sans CJK SC',sans-serif" textLength="13.500" lengthAdjust="spacingAndGlyphs">X</text>
<!-- cursor -->
<path d="M155.500 215.500V231.800L159 228.300L161.700 234L164.300 232.800L161.600 227.200H166.800Z" fill="#fff" stroke="#00002a" stroke-width="1"/>
</svg>

<div class="abs" id="vscroll">
<div class="abs" style="left:1px;top:0;width:1px;height:562px;background:#ddd"></div>
<div class="abs" style="left:17px;top:0;width:1px;height:578px;background:#ccc"></div>
<div class="abs" style="left:0;top:562px;width:18px;height:1px;background:#aaa"></div>
<div class="tri" style="left:5px;top:7px;border-left:4px solid transparent;border-right:4px solid transparent;border-bottom:4px solid #444;"></div>
<div class="abs" style="left:2px;top:18px;width:14px;height:15px;box-sizing:border-box;border:1px solid #999;border-radius:2px;background:linear-gradient(90deg,#fff 0,#fff 45%,#ccc 45%,#ccc 100%);"></div>
<div class="tri" style="left:5px;top:551px;border-left:4px solid transparent;border-right:4px solid transparent;border-top:4px solid #444;"></div>
</div>
<div class="abs" id="tabbar"><div class="abs" style="left:1px;top:0;width:522px;height:15px;">
<div class="nav" style="left:0"></div><div class="nav" style="left:14px"></div><div class="nav" style="left:28px"></div><div class="nav" style="left:42px"></div>
<svg class="abs" style="left:0;top:0" width="522" height="15" viewBox="0 0 522 15">
<g fill="#666"><path d="M3.500 3v9h1.500V3ZM11 3v9L5.500 7.500Z"/><path d="M24 3v9L18.500 7.500Z"/><path d="M32 3v9L37.500 7.500Z"/><path d="M45 3v9L50.500 7.500ZM51 3v9h1.500V3Z"/></g>
<path d="M57 0L61.500 15H96L100.500 0Z" fill="#333"/>
<path d="M97 15L102.500 .5H147.500L143 15M144 15L148.500 .5H193.500L188.500 15" fill="none" stroke="#444" stroke-width="1"/>
<path d="M0 .5H57M193 .5H503" stroke="#ccc" stroke-width="1"/>
<path d="M336 2.500H333.500Q332 2.500 332 4V11Q332 12.500 333.500 12.500H336" fill="none" stroke="#7a8ac0" stroke-width="1"/>
<path d="M347.500 4v7L343.500 7.500Z" fill="#333"/><path d="M493 4v7L497 7.500Z" fill="#333"/>
</svg>
<div class="abs" style="left:355px;top:1px;width:15px;height:13px;box-sizing:border-box;border:1px solid #999;border-radius:2px;background:linear-gradient(#fff 0,#fff 45%,#ccc 45%,#ccc 100%);"></div>
<div class="lbl" style="left:67px;top:0;color:#fff;">模型</div>
<div class="lbl" style="left:107px;top:0;">布局1</div>
<div class="lbl" style="left:153px;top:0;">布局2</div>
</div></div>
<div class="abs" id="tabline"></div>
<div class="abs" id="cmdgrip">
<div class="abs" style="left:0;top:0;width:22px;height:11px;background:#999"></div>
<div class="abs" style="left:0;top:47px;width:22px;height:15px;background:#333"></div>
<svg class="abs" style="left:0;top:0" width="22" height="62" viewBox="7 614 22 62">
<path d="M13 632l8 6.500M21 632l-8 6.500" stroke="#fff" stroke-width="2.400"/>
<g fill="none" stroke-linecap="round"><path d="M13.500 651.600A3 3 0 1 1 11.100 654M16.200 656.700L23 662.500" stroke="#3a3a3a" stroke-width="3.800"/>
<path d="M13.500 651.600A3 3 0 1 1 11.100 654" stroke="#fff" stroke-width="2.100" stroke-linecap="butt"/><path d="M16.200 656.700L23 662.500" stroke="#fff" stroke-width="2.500"/></g>
</svg>
</div>
<div class="abs" id="cmdhist"><div style="position:absolute;left:2px;top:7px;line-height:16px;"><span style="font-size:12.500px">命令<span style="margin-left:1px">:</span></span><br>nil</div></div>
<div class="abs" id="cmdin">
<div class="abs" style="left:5px;top:5px;width:15px;height:14px;box-sizing:border-box;border:1px solid #7cc4c4;border-radius:2px;background:linear-gradient(#fff 0,#fff 8%,#ccc 8%,#ccc 58%,#c8c8ff 58%,#c8c8ff 75%,#fff 75%);"></div>
<svg class="abs" style="left:5px;top:5px" width="30" height="14" viewBox="0 0 30 14"><path d="M3.500 3.500L8 6.800L3.500 10M8 10.500h4.500" fill="none" stroke="#555" stroke-width="1.200"/><path d="M18.500 6.500h5l-2.500 3z" fill="#999"/></svg>
<div class="lbl" style="left:38px;top:3px;color:#aaa;font-size:13px;">鍵入命令</div>
</div>
<div class="abs" id="statline"></div>
<div class="abs" id="status"><div class="sb" style="left:245px"></div><div class="sb" style="left:267px"></div><div class="sb" style="left:289px"></div><div class="sb" style="left:311px"></div><div class="sb" style="left:333px"></div><div class="sb on" style="left:355px"></div><div class="sb" style="left:377px"></div><div class="sb" style="left:399px"></div><div class="sb" style="left:421px"></div><div class="sb" style="left:443px"></div><div class="sb" style="left:465px"></div><div class="sb on" style="left:487px"></div><div class="sb" style="left:509px"></div><div class="sb" style="left:531px"></div><div class="sb" style="left:565px"></div><div class="sb" style="left:587px"></div>
<div class="abs" style="left:552px;top:0;width:12px;height:21px;background:#8a8a8a"></div>
<div class="abs" style="left:608px;top:0;width:19px;height:21px;background:#8a8a8a"></div>
<div class="sb" style="left:627px;width:12px"></div>
<div class="abs" style="left:638px;top:1px;width:44px;height:18px;background:#999;border-top:1px solid #555;border-left:1px solid #555;"></div>
<div class="sb" style="left:682px;width:39px"></div>
<div class="abs" style="left:721px;top:0;width:17px;height:21px;background:#888"></div>
<div class="abs" style="left:10px;top:4px;font-family:'Liberation Mono',monospace;font-size:12px;line-height:14px;letter-spacing:-1.2px;white-space:nowrap;color:#000;">69909.3292, 55514.9540, 0.0000</div>
</div>
<svg class="abs" id="sbicons" style="left:0;top:678px" width="749" height="21" viewBox="0 678 749 21">
<!-- 1 crosshair -->
<path d="M254.500 686.500H266M260.500 680V692.500" stroke="#111" stroke-width="1.300"/><circle cx="260.500" cy="686.500" r="2" fill="none" stroke="#111" stroke-width="1"/>
<rect x="267" y="688" width="3" height="3" fill="#0050e0"/><rect x="264.500" y="692" width="2.500" height="2.500" fill="#fff" stroke="#d05010" stroke-width=".8"/>
<!-- 2 snap dots -->
<g fill="#222"><rect x="280" y="683" width="1" height="1"/><rect x="282" y="683" width="1" height="1"/><rect x="284" y="683" width="1" height="1"/><rect x="286" y="683" width="1" height="1"/><rect x="280" y="685" width="1" height="1"/><rect x="282" y="685" width="1" height="1"/><rect x="284" y="685" width="1" height="1"/><rect x="280" y="687" width="1" height="1"/><rect x="282" y="687" width="1" height="1"/><rect x="284" y="687" width="1" height="1"/><rect x="280" y="689" width="1" height="1"/><rect x="282" y="689" width="1" height="1"/><rect x="284" y="689" width="1" height="1"/></g>
<path d="M288.500 684V692.500M280 692.500H289" stroke="#222" stroke-width="1.200" stroke-dasharray="3 1"/>
<!-- 3 grid -->
<rect x="298.500" y="680.500" width="16" height="14.500" fill="#fff" stroke="#223" stroke-width="1.200" rx="1"/>
<path d="M302 681V695M305.500 681V695M309 681V695M312 681V695M299 684H314M299 687.500H314M299 691H314" stroke="#334" stroke-width="1"/>
<!-- 4 ortho -->
<path d="M320.500 681V695.500H336.500M320.500 689.500H326.500V695.500" fill="none" stroke="#333" stroke-width="1.200"/>
<!-- 5 polar -->
<circle cx="349" cy="688.500" r="4.500" fill="none" stroke="#777" stroke-width="1.200"/>
<path d="M344 692.500H356.500M347 692.500L355.500 683" stroke="#222" stroke-width="1.200" fill="none"/>
<!-- 6 osnap -->
<rect x="366.500" y="683.500" width="13.500" height="11" fill="#fff" stroke="#223" stroke-width="1.300"/><rect x="367.500" y="690" width="11.500" height="2" fill="#d8d8f8"/>
<circle cx="366.500" cy="681.800" r="1.800" fill="#fff" stroke="#e05010" stroke-width="1.200"/>
<!-- 7 3dosnap -->
<path d="M388.500 684.500L391.500 681.500H402.500V690.500L399.500 693.500H388.500Z" fill="#eeeef8" stroke="#444" stroke-width="1"/><path d="M388.500 684.500H399.500V693.500M399.500 684.500L402.500 681.500" fill="none" stroke="#777" stroke-width="1"/>
<rect x="389.500" y="687" width="9" height="4" fill="#d0d0f8"/>
<circle cx="388.500" cy="693.300" r="1.900" fill="#fff" stroke="#e05010" stroke-width="1.200"/>
<!-- 8 otrack -->
<path d="M421 682.500L410.500 692.500H423.500" fill="none" stroke="#222" stroke-width="1.200"/>
<!-- 9 ducs -->
<path d="M431.500 680V694.500H446M431.500 694.500L441 685" fill="none" stroke="#222" stroke-width="1.200"/>
<path d="M429.500 682.500L431.500 679.500L433.500 682.500M443.500 692.500L446.500 694.500L443.500 696.500" fill="none" stroke="#222" stroke-width="1"/>
<path d="M443.500 679.500L440.500 684H443L441.500 688L446 682.500H443.500L445 679.500Z" fill="#ff9010" stroke="#e06000" stroke-width=".5"/>
<!-- 10 dyn -->
<path d="M452 687.500H461M456.500 683V692" stroke="#111" stroke-width="1.300"/><rect x="459.500" y="689.500" width="5.500" height="3" fill="#ddd" stroke="#111" stroke-width="1"/>
<!-- 11 lwt -->
<path d="M477 688H488.500M482.700 682.500V694" stroke="#111" stroke-width="2"/>
<!-- 12 transparency -->
<rect x="497" y="680" width="14" height="15" fill="#fff" stroke="#0060d8" stroke-width="1.200" rx="1"/>
<rect x="499" y="682" width="10" height="11" fill="#70a0e8"/>
<path d="M499 683H509M499 685H509M499 687H509M499 689H509M499 691H509" stroke="#a8c8f8" stroke-width="1" stroke-dasharray="1 1"/>
<path d="M499 684H509M499 686H509M499 688H509M499 690H509M499 692H509" stroke="#a8c8f8" stroke-width="1" stroke-dasharray="1 1" stroke-dashoffset="1"/>
<!-- 13 qp -->
<path d="M517.500 684H523.500M520.500 681V687" stroke="#111" stroke-width="1.200"/>
<rect x="522.500" y="686.500" width="6.500" height="6" fill="#ccc" stroke="#222" stroke-width="1" rx="1"/>
<rect x="526.500" y="689.500" width="7.500" height="6.500" fill="#50b040" stroke="#205018" stroke-width="1" rx="1"/><rect x="527.500" y="690.500" width="5.500" height="2" fill="#a0e090"/>
<!-- 14 sc -->
<path d="M545.500 680.500H550.500V685.500H555.500V690.500H550.500V695.500H545.500V690.500H540.500V685.500H545.500Z" fill="#fff" stroke="#223" stroke-width="1.200"/><rect x="541.500" y="688.500" width="13" height="1.500" fill="#d8d8f8"/>
<!-- 15 model -->
<rect x="576.500" y="682" width="11.500" height="10.500" fill="#fff" stroke="#222" stroke-width="1.200"/>
<path d="M579.500 685V690.500H585Z" fill="none" stroke="#222" stroke-width="1"/>
<path d="M574 695.500H590.500" stroke="#222" stroke-width="1.200"/>
<!-- 16 layout -->
<rect x="597.500" y="682" width="6.500" height="7.500" fill="#fff" stroke="#222" stroke-width="1.200"/><rect x="605.500" y="682" width="6.500" height="7.500" fill="#fff" stroke="#222" stroke-width="1.200"/>
<path d="M597 693H612.500" stroke="#222" stroke-width="2" stroke-linecap="round"/>
<!-- pen -->
<path d="M644.500 680.500Q642 687 637.500 694.500L640.500 693.500Q644.500 687 645.500 681Z" fill="#fff" stroke="#333" stroke-width=".8"/>
<!-- workspace -->
<path d="M650.500 680.500H659L662.500 684V690H650.500Z" fill="#2050c0" stroke="#223" stroke-width="1"/>
<rect x="650.500" y="688" width="10" height="7" fill="#f0d020"/>
<circle cx="653.500" cy="683.500" r="1.800" fill="none" stroke="#fff" stroke-width="1"/><path d="M653.500 685.500V690M655.500 683.500H660" stroke="#fff" stroke-width="1"/>
<path d="M655.500 692.500L658.500 695.500L664.500 689" fill="none" stroke="#20a020" stroke-width="2"/>
<!-- bulb -->
<path d="M677 681Q682 681 682 686Q682 689 679.500 691V694.500H674.500V691Q672 689 672 686Q672 681 677 681Z" fill="#fff4c0" stroke="#d8c890" stroke-width=".8"/>
<circle cx="678.500" cy="685" r="2" fill="#ffd0a0"/>
<rect x="675" y="692.500" width="4" height="4" fill="#fff" stroke="#888" stroke-width=".7"/>
<rect x="685" y="681" width="3" height="9" fill="#aaa"/>
<!-- dropdown -->
<path d="M698 687.500H705L701.500 691.500Z" fill="#111"/>
<!-- window -->
<rect x="710.500" y="681.500" width="14" height="13.500" fill="#fff" stroke="#223" stroke-width="1.200" rx="1"/>
<rect x="711" y="682" width="13" height="2.500" fill="#334"/><rect x="711.500" y="688.500" width="12" height="2" fill="#d8d8f8"/>
<path d="M719 683.200h1M721 683.200h1M723 683.200h1" stroke="#fff" stroke-width="1"/>
<path d="M711 695H724" stroke="#3a8a8a" stroke-width="1"/>
<!-- grip -->
<g fill="#e8e8b8"><circle cx="742" cy="687.500" r="1.100"/><circle cx="738.500" cy="691.500" r="1.100"/><circle cx="742" cy="691.500" r="1.100"/><circle cx="735" cy="695.500" r="1.100"/><circle cx="738.500" cy="695.500" r="1.100"/><circle cx="742" cy="695.500" r="1.100"/></g>
</svg>
<div class="abs" id="botline"></div>
<div class="abs" id="panelhead"><div class="dots" style="left:3px;top:3px;height:12px"></div><span>JS算量插件</span></div>
<div class="abs" id="panel"></div>
<div class="abs" id="grp"></div>
<div class="lbl" style="left:550px;top:56px;background:#fff;padding:0 2px;">当前图纸设置</div>
<div class="lbl" style="left:554px;top:79px;">长度</div>
<div class="combo" style="left:599px;top:77px;width:50px;height:21px;"><span>m</span></div>
<div class="combo" style="left:659px;top:77px;width:65px;height:21px;"><span>0.00</span></div>
<div class="lbl" style="left:554px;top:106px;">面积</div>
<div class="combo" style="left:599px;top:104px;width:50px;height:21px;"><span>m2</span></div>
<div class="combo" style="left:659px;top:104px;width:65px;height:21px;"><span>0.00</span></div>
<div class="lbl" style="left:553px;top:132px;">图纸1<span style="letter-spacing:2.5px">:</span> 实际<span style="font-size:10.5px;letter-spacing:-.3px">(mm)</span></div>
<div class="inp" style="left:649px;top:132px;width:49px;height:16px;">1.0</div>
<div class="pick" style="left:700px;top:132px;width:24px;height:16px;"><svg width="22" height="14" viewBox="701 133 22 14" style="position:absolute;left:0;top:0"><path d="M707 133.300l5.500 5M712.500 133.300l-5.500 5" stroke="#ff0000" stroke-width="1.400"/><path d="M710.500 136V144.800L712.800 142.800L714.600 146.600L716 146L714.300 142.300L716.800 142Z" fill="#ffffa0" stroke="#002060" stroke-width=".9"/></svg></div>
<div class="btn" style="left:555px;top:154px;width:32px;height:18px;"><span>线宽</span></div>
<div class="btn" style="left:597px;top:154px;width:32px;height:18px;"><span>字高</span></div>
<div class="lbl" style="left:633px;top:155px;">容差</div>
<div class="inp" style="left:664px;top:154px;width:34px;height:16px;">0.1</div>
<div class="pick" style="left:700px;top:154px;width:24px;height:16px;"><svg width="22" height="14" viewBox="701 133 22 14" style="position:absolute;left:0;top:0"><path d="M707 133.300l5.500 5M712.500 133.300l-5.500 5" stroke="#ff0000" stroke-width="1.400"/><path d="M710.500 136V144.800L712.800 142.800L714.600 146.600L716 146L714.300 142.300L716.800 142Z" fill="#ffffa0" stroke="#002060" stroke-width=".9"/></svg></div>
<div class="lbl" style="left:542px;top:187px;">分区分类</div>
<div class="combo" style="left:599px;top:184px;width:128px;height:21px;"></div>
<div class="abs" id="tbl"></div>
<div class="abs" id="tblhead"></div>
<div class="abs" id="tblsel"></div>
<div class="abs" style="left:732px;top:222px;width:1px;height:11px;background:#bbb"></div>
<div class="lbl" style="left:575px;top:216px;">特征分类</div>
<div class="lbl" style="left:675px;top:216px;">数值</div>
<div class="abs" id="tblscroll"></div>
<div class="abs" id="thumb"></div>
<div class="abs" style="left:623px;top:402px;width:1px;height:6px;background:#555;box-shadow:2px 0 0 #555,4px 0 0 #555;"></div>
<div class="tri" style="left:550px;top:402px;border-top:3.5px solid transparent;border-bottom:3.5px solid transparent;border-right:4px solid #333;"></div>
<div class="tri" style="left:724px;top:402px;border-top:3.5px solid transparent;border-bottom:3.5px solid transparent;border-left:4px solid #333;"></div>
<div class="abs" id="wu">无</div>
<div class="abs" id="chk"></div>
<div class="lbl" style="left:614px;top:421px;">追加</div>
<div class="btn" style="left:667px;top:418px;width:67px;height:20px;line-height:17px;"><span><b class="ar">↑</b>复制列表</span></div>
<div class="btn" style="left:543px;top:441px;width:86px;height:21px;line-height:18px;"><span>拾取文字修改</span></div>
<div class="btn" style="left:655px;top:441px;width:79px;height:21px;line-height:18px;"><span>删除当前分类</span></div>
<div class="abs" id="ta"></div>
<div class="abs" style="left:725px;top:465px;width:1px;height:180px;background:#e4e4e4"></div>
<div class="tri" style="left:728px;top:472px;border-left:4px solid transparent;border-right:4px solid transparent;border-bottom:4px solid #666;"></div>
<div class="tri" style="left:728px;top:634px;border-left:4px solid transparent;border-right:4px solid transparent;border-top:4px solid #666;"></div>
<div class="lbl" style="left:542px;top:648px;color:#0000ff;">网站</div>
<div class="lbl" style="left:601px;top:648px;">明细加和</div>
<div class="btn" style="left:667px;top:648px;width:67px;height:21px;line-height:18px;"><span><b class="ar">↑</b>复制明细</span></div>
<div class="abs" id="right-edge"><i style="left:0;background:#555"></i><i style="left:1px;background:#fff"></i><i style="left:2px;background:#9999cc"></i><i style="left:3px;background:#111"></i></div>
<div class="abs" id="frame-top"></div>
</body>
</html>
